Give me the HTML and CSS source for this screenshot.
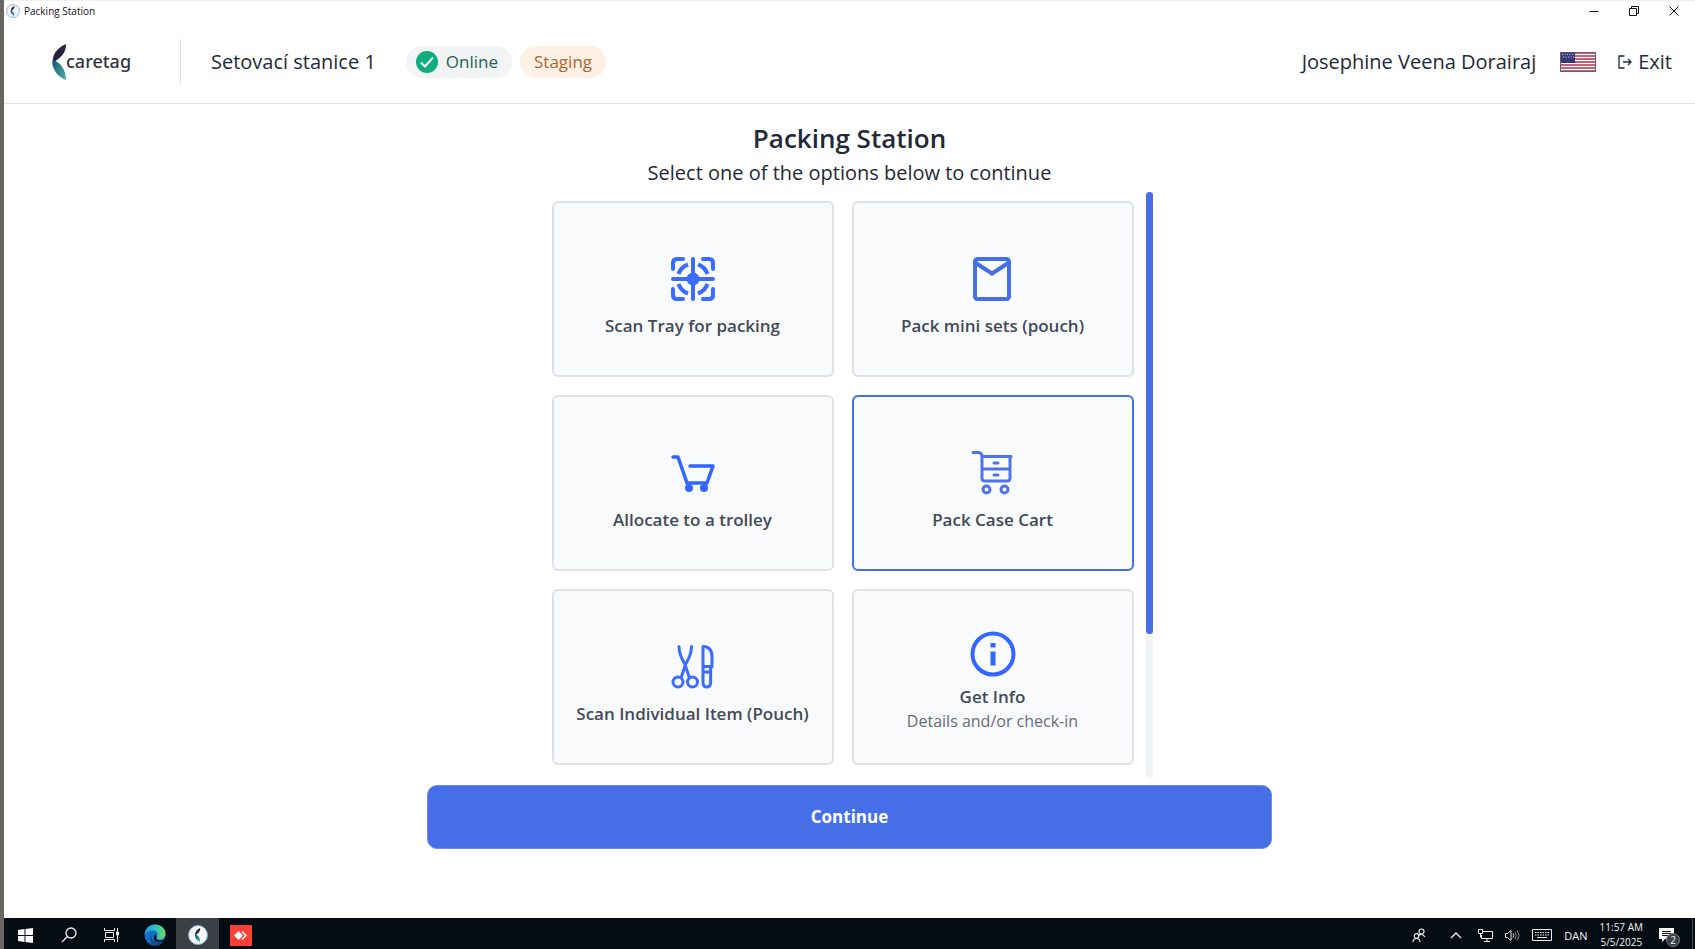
FILE: index.html
```html
<!DOCTYPE html>
<html lang="en">
<head>
  <meta charset="UTF-8">
  <meta name="viewport" content="width=device-width, initial-scale=1.0">
  <title>Packing Station</title>
  <link rel="stylesheet" href="styles.css">
</head>
<body>
  <!-- shared app symbol -->
  <svg class="defs" width="0" height="0" aria-hidden="true">
    <symbol id="leaf" viewBox="0 0 14 36">
      <path d="M14 0C7 3 1 9 1 15.500C1 17 1.500 18 2 19C4 15 14 13 14 0Z" fill="#26243a"/>
      <path d="M1 14C0 18 0 21 2 25C4 30 9 34 14 36C14 27 10 21 5 18C3 17 1.500 16 1 14Z" fill="url(#teal)"/>
    </symbol>
    <linearGradient id="teal" x1="0" y1="0" x2="1" y2="1">
      <stop offset="0" stop-color="#1d3f78"/>
      <stop offset="0.450" stop-color="#2c7f86"/>
      <stop offset="1" stop-color="#4fb3a9"/>
    </linearGradient>
  </svg>

  <div class="titlebar">
    <svg width="14" height="14" viewBox="0 0 14 14"><circle cx="7" cy="7" r="6.500" fill="#eef3fb" stroke="#9db4dc"/><use href="#leaf" x="4" y="2" width="5" height="10"/></svg>
    <span class="titlebar-text">Packing Station</span>
    <div class="window-buttons">
      <button aria-label="Minimize"><svg width="10" height="10" viewBox="0 0 10 10"><path d="M0.500 5.500h9" stroke="#111"/></svg></button>
      <button aria-label="Restore"><svg width="10" height="10" viewBox="0 0 10 10" fill="none" stroke="#111"><path d="M0.500 2.500h7v7h-7zM2.500 2.500v-2h7v7h-2"/></svg></button>
      <button aria-label="Close"><svg width="10" height="10" viewBox="0 0 10 10"><path d="M0.500 0.500l9 9M9.500 0.500l-9 9" stroke="#111"/></svg></button>
    </div>
  </div>

  <header class="header">
    <div class="logo">
      <svg width="14" height="36"><use href="#leaf"/></svg>
      <span>caretag</span>
    </div>
    <div class="station">Setovací stanice 1</div>
    <div class="pill online">
      <svg width="22" height="22" viewBox="0 0 22 22" fill="none"><circle cx="11" cy="11" r="11" fill="#0eae7b"/><path d="M5 11.500l4 4 8-9" stroke="#fff" stroke-width="2"/></svg>
      Online
    </div>
    <div class="pill staging">Staging</div>
    <div class="user">Josephine Veena Dorairaj</div>
    <button class="language" aria-label="Language">
      <svg width="36" height="20" viewBox="0 0 36 20">
        <path fill="#fff" d="M0 0h36v20H0z"/>
        <path d="M0 1h36M0 4h36M0 7h36M0 10h36M0 13h36M0 16h36M0 19h36" stroke="#b3314a" stroke-width="1.500"/>
        <path fill="#35377c" d="M0 0h15v11H0z"/>
        <path d="M2 2.500h12M3 5h11" stroke="#d5d5ea" stroke-dasharray="1 1.500"/>
        <path fill="none" stroke="#6c5b68" d="M0.500 0.500h35v19h-35z"/>
      </svg>
    </button>
    <a class="exit" href="#">
      <svg width="14" height="14" viewBox="0 0 14 14" fill="none" stroke="#1f2937" stroke-width="1.300"><path d="M6.500 1H1v12h5.500M5 7h8M10 4l3 3-3 3"/></svg>
      Exit
    </a>
  </header>

  <main class="main">
    <h1>Packing Station</h1>
    <p class="subtitle">Select one of the options below to continue</p>

    <div class="scroller">
      <div class="options">
        <button class="option">
          <svg width="46" height="46" viewBox="0 0 46 46" fill="none" stroke="#3b6cff" stroke-width="4" stroke-linecap="round">
            <path d="M3 13V7q0-4 4-4h6M33 3h6q4 0 4 4v6M43 33v6q0 4-4 4h-6M13 43H7q-4 0-4-4v-6"/>
            <path d="M23 3v40M3 23h40"/>
            <path d="M8.500 18Q11 11 18 8.500M28 8.500Q35 11 37.500 18M37.500 28Q35 35 28 37.500M18 37.500Q11 35 8.500 28" stroke-linecap="butt"/>
            <circle cx="23" cy="23" r="6.500" fill="#3b6cff" stroke="none"/>
          </svg>
          <span class="label">Scan Tray for packing</span>
        </button>
        <button class="option">
          <svg width="46" height="46" viewBox="0 0 46 46" fill="none" stroke="#466ee6" stroke-width="4">
            <rect x="5" y="3" width="34" height="40" rx="2.500"/>
            <path d="M5 6.500l17 11 17-11"/>
          </svg>
          <span class="label">Pack mini sets (pouch)</span>
        </button>
        <button class="option">
          <svg width="46" height="46" viewBox="0 0 46 46" fill="none" stroke="#3366ff" stroke-width="3.500" stroke-linecap="round" stroke-linejoin="round">
            <path d="M3 7h5l9 26h20l6-17H20"/>
            <circle cx="19" cy="38" r="4" fill="#3366ff" stroke="none"/>
            <circle cx="34" cy="38" r="4" fill="#3366ff" stroke="none"/>
          </svg>
          <span class="label">Allocate to a trolley</span>
        </button>
        <button class="option selected">
          <svg width="46" height="46" viewBox="0 0 46 46" fill="none" stroke="#5074e6" stroke-width="3" stroke-linecap="round" stroke-linejoin="round">
            <path d="M3 2.500h5q4 0 4 4h29M12 6v22q0 3 3 3h22q3 0 3-3V7M12 19h28"/>
            <path d="M24 13h4M24 25h4"/>
            <circle cx="16.500" cy="39.500" r="3.500"/>
            <circle cx="34.500" cy="39.500" r="3.500"/>
          </svg>
          <span class="label">Pack Case Cart</span>
        </button>
        <button class="option">
          <svg width="46" height="46" viewBox="0 0 46 46" fill="none" stroke="#3b6cff" stroke-width="3" stroke-linecap="round" stroke-linejoin="round">
            <path d="M9 2.500c0 7 3 13 6 18l4 12M21.500 2.500c0 7-3 13-6 18l-4 12"/>
            <circle cx="8" cy="38" r="5"/>
            <circle cx="22.500" cy="38" r="5"/>
            <path d="M33 2.500v36q0 4.500 3.800 4.500t3.800-4.500V23h1.400V13Q42 2.500 33 2.500zM33 22.500h8M33 28h7.500"/>
          </svg>
          <span class="label">Scan Individual Item (Pouch)</span>
        </button>
        <button class="option with-note">
          <svg width="46" height="46" viewBox="0 0 46 46" fill="none" stroke="#3366ff" stroke-width="4">
            <circle cx="23" cy="23" r="20.500"/>
            <path d="M23 12v4.500M23 20.500v14" stroke-width="5"/>
          </svg>
          <span class="label">Get Info</span>
          <span class="note">Details and/or check-in</span>
        </button>
      </div>
      <div class="track"><div class="thumb"></div></div>
    </div>

    <button class="continue">Continue</button>
  </main>

  <footer class="taskbar">
    <button class="task" aria-label="Start"><svg width="15" height="15" viewBox="0 0 15 15"><path fill="#fff" d="M0 2l6.500-1v6H0zM7.500 0.900L15 0v7H7.500zM0 8h6.500v6L0 13zM7.500 8H15v7l-7.500-0.900z"/></svg></button>
    <button class="task" aria-label="Search"><svg width="16" height="16" viewBox="0 0 16 16" fill="none" stroke="#eee" stroke-width="1.300"><circle cx="10" cy="6" r="5"/><path d="M6.500 9.500L1 15"/></svg></button>
    <button class="task" aria-label="Task view"><svg width="16" height="14" viewBox="0 0 16 14" fill="none" stroke="#eee"><path d="M0.500 0v2.500h10V0M0.500 14v-2.500h10V14M1.500 4.500h8v5h-8zM13.500 0v14"/><path d="M12.500 4h2v3h-2z" fill="#eee"/></svg></button>
    <button class="task" aria-label="Edge">
      <svg width="22" height="22" viewBox="0 0 22 22">
        <defs><linearGradient id="edge" x1="0" x2="1"><stop offset="0" stop-color="#1c9de0"/><stop offset="0.500" stop-color="#2bc0c9"/><stop offset="1" stop-color="#6bdc55"/></linearGradient></defs>
        <circle cx="11" cy="11" r="10.500" fill="#136fc8"/>
        <path d="M0.500 11C1 4 6 0.500 11 0.500c6 0 10.500 4 10.500 9 0 4-3 6-6 6-2.500 0-3.500-1-2.500-2.500C15 9 12 6.500 9 6.500c-4 0-7 2-8.500 4.500z" fill="url(#edge)"/>
        <path d="M8 10c-2 4 1 8 6 8 2.500 0 5-1 6.500-2.500-2 4-5.500 6-9.500 6-5-1-6.500-8-3-11.500z" fill="#0b4d92"/>
        <path d="M12.500 13c-1 2 1 3.500 4 3.500 2 0 4-1 5-2.500l0.500 2-2 1c-4 2-9 1-10-2-0.500-2 0.500-4 1.500-4.500q1.500 1 1 2.500z" fill="#060c13"/>
      </svg>
    </button>
    <button class="task active" aria-label="Packing Station"><svg width="20" height="20" viewBox="0 0 20 20"><circle cx="10" cy="10" r="9.500" fill="#f4f8fc" stroke="#8aa9d6"/><use href="#leaf" x="6" y="3" width="7" height="14"/></svg></button>
    <button class="task" aria-label="AnyDesk"><svg width="22" height="21" viewBox="0 0 22 21"><path fill="#fb3e36" d="M0 0h22v21H0z"/><path fill="#fff" d="M8.500 6l4.500 4.500L8.500 15 4 10.500z"/><path d="M12 6.500l4 4-4 4" fill="none" stroke="#fff" stroke-width="1.500"/></svg></button>

    <div class="tray">
      <svg width="14" height="15" viewBox="0 0 14 15" fill="none" stroke="#eee" stroke-width="1.200"><circle cx="9.500" cy="3.500" r="2.500"/><path d="M6.500 8q3-3.500 6.500 1"/><circle cx="4.500" cy="8" r="2.300"/><path d="M0.800 14q0.500-3.500 3.700-3.500T8 14"/></svg>
      <svg class="chevron" width="12" height="7" viewBox="0 0 12 7" fill="none" stroke="#eee" stroke-width="1.300"><path d="M1 6l5-5 5 5"/></svg>
      <svg width="15" height="13" viewBox="0 0 15 13" fill="none" stroke="#eee"><path d="M5 2.500h9.500v7H3.500V6M9 9.500v3M6 12.500h6M0.500 0.500h4v4h-4zM2.500 4.500v4"/></svg>
      <svg width="15" height="13" viewBox="0 0 15 13" fill="none" stroke="#eee"><path d="M0.500 4.500h2l3.500-3v10l-3.500-3h-2zM8 4.500q1.500 2 0 4"/><path d="M10 3q2.500 3.500 0 7M12 1.500q4 5 0 10" stroke="#888"/></svg>
      <svg width="20" height="12" viewBox="0 0 20 12" fill="none" stroke="#eee"><path d="M0.500 0.500h19v11h-19z"/><path d="M3 3.500h14M3 6h14" stroke-dasharray="1.500 1"/><path d="M5 8.500h10"/></svg>
      <span class="lang">DAN</span>
      <div class="clock"><span>11:57 AM</span><span>5/5/2025</span></div>
      <div class="notify">
        <svg width="15" height="14" viewBox="0 0 15 14"><path fill="#fff" d="M0 0h15v11H6l-3 3v-3H0z"/><path d="M3 3.500h9M3 5.500h9M3 7.500h6" stroke="#111"/></svg>
        <span class="badge">2</span>
      </div>
    </div>
  </footer>
</body>
</html>
```

FILE: styles.css
```css
* {
  box-sizing: border-box;
}
body {
  margin: 0;
  height: 100vh;
  display: flex;
  flex-direction: column;
  border-left: 4px solid #686663;
  background: #fff;
  color: #1f2937;
  font-family: "Open Sans", "Noto Sans", sans-serif;
}
button {
  font-family: inherit;
  border: none;
  padding: 0;
  background: none;
}
svg {
  flex: none;
  display: block;
}
.defs {
  position: absolute;
}

/* window title */
.titlebar {
  display: flex;
  align-items: center;
  height: 22px;
  padding: 0 1px 2px 2px;
  gap: 4px;
  border-top: 1px solid #f0f0f0;
  color: #111;
}
.titlebar-text {
  font-size: 10px;
}
.window-buttons {
  display: flex;
  margin-left: auto;
}
.window-buttons button {
  display: flex;
  align-items: center;
  justify-content: center;
  width: 40px;
  height: 18px;
}

/* header */
.header {
  display: flex;
  align-items: center;
  height: 82px;
  padding: 0 23px 2px 48px;
  border-bottom: 1px solid #dfe1e3;
  font-size: 20px;
}
.logo {
  display: flex;
  align-items: center;
  width: 129px;
  height: 46px;
  border-right: 1px solid #e2e6ea;
}
.logo span {
  font-family: "Noto Sans", sans-serif;
  font-size: 18px;
  font-weight: 500;
  line-height: 30px;
  color: #34323f;
  padding-bottom: 2px;
}
.station {
  margin: 0 30px;
}
.pill {
  display: flex;
  align-items: center;
  gap: 8px;
  height: 32px;
  padding: 0 14px;
  border-radius: 16px;
  font-size: 17px;
}
.online {
  padding-left: 10px;
  margin-right: 8px;
  background: #f2f4f6;
  color: #23624d;
}
.staging {
  background: #fdf1e6;
  color: #b3622c;
}
.user {
  margin-left: auto;
}
.language {
  margin: 0 22px 0 24px;
}
.exit {
  display: flex;
  align-items: center;
  gap: 6px;
  color: inherit;
  text-decoration: none;
}

/* content */
.main {
  flex: 1;
  min-height: 0;
  display: flex;
  flex-direction: column;
  align-items: center;
  padding: 16px 0 69px;
}
h1 {
  margin: 0;
  font-size: 26px;
  font-weight: 600;
  line-height: 36px;
}
.subtitle {
  margin: 0 0 2px;
  font-size: 20px;
  line-height: 34px;
}
.scroller {
  flex: 1;
  min-height: 0;
  display: flex;
  gap: 12px;
  overflow: hidden;
}
.options {
  display: grid;
  grid-template-columns: 282px 282px;
  grid-auto-rows: 176px;
  gap: 18px;
  padding: 9px 0 9px 5px;
}
.option {
  display: flex;
  flex-direction: column;
  align-items: center;
  justify-content: center;
  gap: 12px;
  padding-top: 16px;
  border: 2px solid #dfe1e6;
  border-radius: 6px;
  background: #f9fafc;
  color: #434a56;
}
.option.selected {
  border-color: #466ee6;
}
.option.with-note {
  gap: 0;
  padding-top: 10px;
}
.with-note .label {
  margin-top: 8px;
}
.label {
  font-size: 17px;
  font-weight: 600;
  line-height: 24px;
}
.note {
  font-size: 16px;
  line-height: 24px;
  color: #666c76;
}
.track {
  width: 7px;
  background: #f2f3f5;
}
.thumb {
  height: 75%;
  min-height: 442px;
  border-radius: 4px;
  background: #466ee6;
}
.continue {
  flex: none;
  width: 50%;
  height: 64px;
  margin-top: 7px;
  padding-bottom: 2px;
  border: 1px solid #6d8ceb;
  border-radius: 10px;
  background: #466ee6;
  color: #fff;
  font-size: 17px;
  font-weight: 700;
}

/* taskbar */
.taskbar {
  display: flex;
  height: 31px;
  padding-right: 2px;
  background: #060c13;
  color: #f2f2f2;
}
.task {
  display: flex;
  align-items: center;
  justify-content: center;
  width: 43px;
  padding-top: 3px;
}
.task.active {
  background: #3b3f46;
}
.tray {
  display: flex;
  align-items: center;
  gap: 12px;
  margin-left: auto;
  padding: 3px 18px 0 0;
  border-right: 1px solid #4a4f55;
}
.chevron {
  margin: 0 4px 0 12px;
}
.lang {
  font-size: 11px;
}
.clock {
  display: flex;
  flex-direction: column;
  align-items: center;
  font-size: 10px;
  line-height: 15px;
}
.notify {
  position: relative;
  margin-left: 4px;
}
.badge {
  position: absolute;
  left: 7px;
  top: 5px;
  width: 14px;
  height: 14px;
  border: 1px solid #777c82;
  border-radius: 50%;
  background: #3a3f45;
  font-size: 10px;
  line-height: 12px;
  text-align: center;
}
```
